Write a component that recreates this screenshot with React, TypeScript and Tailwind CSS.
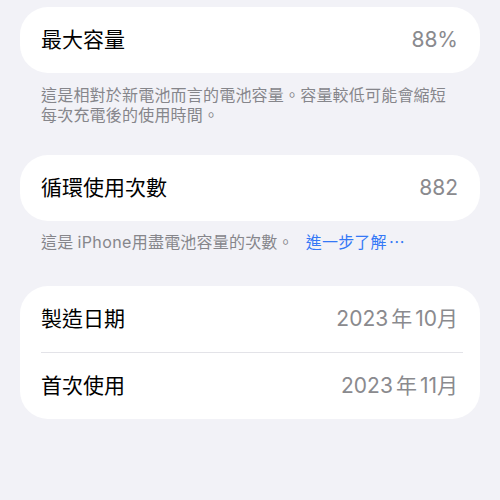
import React from "react";

const font = { fontFamily: 'Inter, "Noto Sans CJK TC", sans-serif' };

function Row({ label, value }: { label: string; value: React.ReactNode }) {
  return (
    <div className="flex h-[66px] items-center justify-between pl-[21px] pr-[22px]">
      <span className="text-[21px] text-black">{label}</span>
      <span className="text-[21px] text-[#8a8a8e]">{value}</span>
    </div>
  );
}

function YearMonth({ year, month }: { year: string; month: string }) {
  return (
    <>
      {year}
      <span className="mx-[3px]">年</span>
      {month}月
    </>
  );
}

export default function App() {
  return (
    <div className="min-h-[500px] w-[500px] bg-[#f2f2f7] px-5 pt-[7px]" style={font}>
      <div className="rounded-[28px] bg-white">
        <Row label="最大容量" value="88%" />
      </div>
      <p className="mt-3 whitespace-nowrap pl-[21px] text-[16px] leading-[20px] tracking-[0.2px] text-[#86868b]">
        這是相對於新電池而言的電池容量。容量較低可能會縮短
        <br />
        每次充電後的使用時間。
      </p>

      <div className="mt-[30px] rounded-[28px] bg-white">
        <Row label="循環使用次數" value="882" />
      </div>
      <p className="mt-[11px] whitespace-nowrap pl-[21px] text-[16px] leading-[20px] tracking-[0.2px] text-[#86868b]">
        這是<span className="ml-[4px] tracking-[0.4px]">iPhone</span>用盡電池容量的次數。
        <span className="ml-[12px] text-[#3478f6]">
          進一步了解<span className="ml-[2px]">⋯</span>
        </span>
      </p>

      <div className="mt-[34px] rounded-[28px] bg-white">
        <Row label="製造日期" value={<YearMonth year="2023" month="10" />} />
        <div className="ml-[21px] mr-[17px] h-px bg-[#e3e3e8]" />
        <Row label="首次使用" value={<YearMonth year="2023" month="11" />} />
      </div>
    </div>
  );
}
